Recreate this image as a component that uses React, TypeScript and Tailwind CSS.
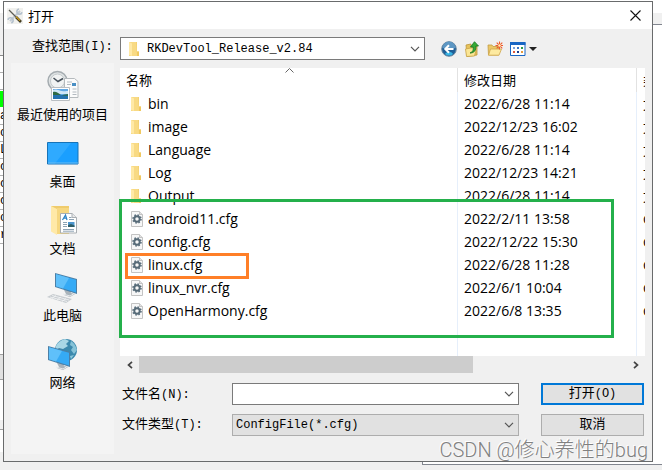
import React from "react";

const UI = "font-['Open_Sans','Noto_Sans_CJK_SC',sans-serif]";
const MONO = "font-['Liberation_Mono','Noto_Sans_CJK_SC',monospace]";

type Entry = { name: string; date: string; kind: "folder" | "cfg" };

const entries: Entry[] = [
  { name: "bin", date: "2022/6/28 11:14", kind: "folder" },
  { name: "image", date: "2022/12/23 16:02", kind: "folder" },
  { name: "Language", date: "2022/6/28 11:14", kind: "folder" },
  { name: "Log", date: "2022/12/23 14:21", kind: "folder" },
  { name: "Output", date: "2022/6/28 11:14", kind: "folder" },
  { name: "android11.cfg", date: "2022/2/11 13:58", kind: "cfg" },
  { name: "config.cfg", date: "2022/12/22 15:30", kind: "cfg" },
  { name: "linux.cfg", date: "2022/6/28 11:28", kind: "cfg" },
  { name: "linux_nvr.cfg", date: "2022/6/1 10:04", kind: "cfg" },
  { name: "OpenHarmony.cfg", date: "2022/6/8 13:35", kind: "cfg" },
];

function FolderIcon() {
  return (
    <svg width="12" height="16" viewBox="0 0 12 16" aria-hidden="true" className="shrink-0">
      <path d="M0 1h8v9.500h2V15H0z" fill="#f8da84" />
      <path d="M0 1l3 1.500V15L0 13.800z" fill="#ffe9a6" />
      <path d="M7.500 1H8v9.500h2V15H8z" fill="#efc860" />
    </svg>
  );
}

function CfgIcon() {
  return (
    <svg width="12" height="16" viewBox="0 0 12 16" aria-hidden="true" className="shrink-0">
      <path d="M.5.5h8l3 3v12H.5z" fill="#f7f7f7" stroke="#c3c3c3" />
      <path d="M8.5.5v3h3" fill="#e2e2e2" stroke="#c3c3c3" />
      <circle cx="6" cy="8" r="4" fill="none" stroke="#5f7380" strokeWidth="1.6" strokeDasharray="1.6 1.54" />
      <circle cx="6" cy="8" r="2.7" fill="none" stroke="#566a77" strokeWidth="1.9" />
    </svg>
  );
}

function ChevronDown() {
  return (
    <svg width="10" height="6" viewBox="0 0 10 6" aria-hidden="true" className="shrink-0">
      <path d="M1 .8l4 4 4-4" fill="none" stroke="#555" strokeWidth="1.2" />
    </svg>
  );
}

function ToolsIcon() {
  return (
    <svg width="16" height="16" viewBox="0 0 16 16" aria-hidden="true">
      <rect width="16" height="16" fill="#f1f1ee" />
      <path d="M13 3L3 13" stroke="#c3ccd5" strokeWidth="2" />
      <path d="M12 1a2.600 2.600 0 1 0 3 3.200M1 11.800a2.600 2.600 0 1 1 3.200 3" fill="none" stroke="#b4c1ce" strokeWidth="1.600" />
      <path d="M2 2l7 7" stroke="#5c5c56" strokeWidth="1.200" />
      <path d="M9 9l5 5" stroke="#3f3a22" strokeWidth="2.600" />
      <path d="M9 8.600l4 4" stroke="#d9a51f" strokeWidth="1.200" />
    </svg>
  );
}

function Screen({ x, y }: { x: number; y: number }) {
  return (
    <g transform={`translate(${x} ${y})`}>
      <path d="M9 17l6-1 1 4 4 1-5 3-6-2 2-1z" fill="#a9b3ba" />
      <path d="M8 21l7 2 5-3" fill="none" stroke="#e8ecee" />
      <path d="M0 0l22 6v15L0 14z" fill="#4b7fa6" />
      <path d="M1 1.3l20 5.5v12.7L1 13.2z" fill="#35aaf5" />
      <path d="M1 1.3l13 3.6L8 15.4 1 13.2z" fill="#5fc0fa" />
    </g>
  );
}

function RecentIcon() {
  return (
    <svg width="32" height="32" viewBox="0 0 32 32" aria-hidden="true">
      <circle cx="10.500" cy="11" r="9.500" fill="#dfe3e4" stroke="#a5acb0" strokeWidth="1.500" />
      <circle cx="10.500" cy="11" r="7" fill="#f1f3f3" stroke="#c4cacc" />
      <path d="M6.500 8l4.500 3.500 5-3" fill="none" stroke="#46505a" strokeWidth="1.500" />
      <path d="M17.500 8.500h10l3.500 3v16H17.500z" fill="#fbfbfb" stroke="#b5babd" />
      <path d="M20 12h5M20 14.500h4M25.500 19h4M25.500 22h4M25.500 24.500h4" stroke="#b3bac0" />
      <path d="M25 13h4v3h-4z" fill="#4a8fc4" />
      <path d="M4.500 17.500h18v13h-18z" fill="#fff" stroke="#b9bec2" />
      <path d="M6 19h15v10H6z" fill="#62a8e4" />
      <path d="M6 20c4-2 6 2 15 1v3H6z" fill="#cfe6f7" />
      <path d="M6 22c3-1 5 1 8 3H6z" fill="#2f6b44" />
      <path d="M6 25h15v4H6z" fill="#2471ae" />
      <path d="M15 25.500c2-1.500 4-1 6-1.500v2z" fill="#2d6c50" />
    </svg>
  );
}

function DesktopIcon() {
  return (
    <svg width="32" height="32" viewBox="0 0 32 32" aria-hidden="true">
      <path d="M.5 5.500h30.500v21.500H.5z" fill="#1a9fff" stroke="#1673b8" />
      <path d="M1 6h23L8 26.500H1z" fill="#37adff" opacity=".75" />
      <path d="M1 26h30" stroke="#6bbcf2" />
    </svg>
  );
}

function DocumentsIcon() {
  return (
    <svg width="32" height="32" viewBox="0 0 32 32" aria-hidden="true">
      <path d="M4 2h18v26H8z" fill="#efcb6c" />
      <path d="M4 2l6 3v26l-6-3.500z" fill="#ffe9a8" />
      <path d="M10 4h12v26H10z" fill="#f6d780" />
      <path d="M13.500 9.500h11.500l4.500 4v15.500h-16z" fill="#fff" stroke="#a9aeb2" />
      <path d="M25 9.500v4h4.500" fill="#e6e8ea" stroke="#a9aeb2" />
      <path d="M15.500 16l3-5 1.500 5M16.800 14.200h2.600" stroke="#2b82c5" fill="none" strokeWidth="1.200" />
      <path d="M22 13.500h2.500M22 15.500h5M16 18.500h4M16 20.500h4M16 22.500h4M16 25.500h11M16 27.200h11" stroke="#8da3b4" />
      <path d="M21 18h6.500v5H21z" fill="#4d96ce" />
      <path d="M21 21l3-1 3.500 1.500V23H21z" fill="#2d5c66" />
    </svg>
  );
}

function ComputerIcon() {
  return (
    <svg width="32" height="32" viewBox="0 0 32 32" aria-hidden="true">
      <Screen x={8} y={2} />
      <path d="M0 26l6-3 19 5-6 4z" fill="#c7ccd0" />
      <path d="M3 26l17 4.500M5 24.500l17 4.500M5 27.500l4-3M10 29l4-3M15 30.500l4-3" stroke="#f4f5f6" strokeWidth=".8" />
    </svg>
  );
}

function NetworkIcon() {
  return (
    <svg width="32" height="32" viewBox="0 0 32 32" aria-hidden="true">
      <circle cx="19" cy="12" r="11" fill="#3b89ad" />
      <path d="M9 8c2-4 5-6 9-7l4 2-3 3 2 2-5 3-4-1-4 3z" fill="#a8d7e6" />
      <path d="M24 3c3 2 5 5 6 9l-3 4-3-4 2-3-3-2z" fill="#86c3d8" />
      <path d="M23 18l4-1-3 4z" fill="#8bc9dc" />
      <Screen x={1} y={8} />
    </svg>
  );
}

const places = [
  { label: "最近使用的项目", icon: <RecentIcon /> },
  { label: "桌面", icon: <DesktopIcon /> },
  { label: "文档", icon: <DocumentsIcon /> },
  { label: "此电脑", icon: <ComputerIcon /> },
  { label: "网络", icon: <NetworkIcon /> },
];

function BackIcon() {
  return (
    <svg width="16" height="16" viewBox="0 0 16 16" aria-hidden="true">
      <circle cx="8" cy="8" r="7.300" fill="#1f5f97" stroke="#708aa0" />
      <path d="M1.500 7a6.500 6.500 0 0 1 13 0c-4 1.500-9 1.500-13 0z" fill="#5d97c4" />
      <path d="M4 13c2-3 6-3 8 0a6 6 0 0 1-8 0z" fill="#38b4e4" />
      <path d="M12.500 8H4.500M8 4.300L4.300 8 8 11.700" fill="none" stroke="#fff" strokeWidth="2" />
    </svg>
  );
}

function UpIcon() {
  return (
    <svg width="16" height="16" viewBox="0 0 16 16" aria-hidden="true">
      <path d="M2 4l5-1v3l6-1v9l-10 1.500z" fill="#e7c35b" stroke="#bd963a" strokeWidth=".8" />
      <path d="M1.500 8l8-1.500 3 1-2 7.500-8 .5z" fill="#fbe694" stroke="#c7a146" strokeWidth=".8" />
      <path d="M6 12c3-1 3.500-3 3.200-6H6.500L10.500.7 14.500 5h-2.700c.4 4-1.300 7-5.800 7z" fill="#35ab35" stroke="#167320" strokeWidth=".8" />
    </svg>
  );
}

function NewFolderIcon() {
  return (
    <svg width="16" height="16" viewBox="0 0 16 16" aria-hidden="true">
      <path d="M1 4h4l1 1.500h5.500V14H1.500z" fill="#ecc867" stroke="#c39c42" strokeWidth=".8" />
      <path d="M3.500 8h11L12 14.200H1.500z" fill="#fdeaa0" stroke="#cfa64a" strokeWidth=".8" />
      <path d="M12.500.5v8M8.500 4.500h8M9.700 1.700l5.600 5.600M15.300 1.700L9.700 7.300" stroke="#ee5a2b" strokeWidth="1.100" />
      <circle cx="12.500" cy="4.500" r="1.300" fill="#fff1b5" />
    </svg>
  );
}

function ViewIcon() {
  return (
    <svg width="16" height="14" viewBox="0 0 16 14" aria-hidden="true">
      <path d="M.5.5h14.500v13H.5z" fill="#fff" stroke="#1966c4" />
      <path d="M0 0h15.500v3H0z" fill="#1966c4" />
      <path d="M3 5h2v2H3z" fill="#7ba1d8" />
      <path d="M7 5h2v2H7z" fill="#3a75c6" />
      <path d="M11 5h2v2h-2z" fill="#2c9a48" />
      <path d="M3 9h2v2H3z" fill="#e05a3b" />
      <path d="M7 9h2v2H7z" fill="#1b3e8c" />
      <path d="M11 9h2v2h-2z" fill="#e79a3c" />
    </svg>
  );
}

/* Left edge of the main window, visible beside the dialog. */
function WindowLeftEdge() {
  const cells = ["a", "o", "L", "c", "c", "c", "o", "r"];
  return (
    <div aria-hidden="true" className={`${MONO} flex w-[3px] shrink-0 flex-col overflow-hidden bg-white text-[12px] leading-4`}>
      <div className="h-3 shrink-0" />
      <div className="h-[43px] shrink-0 border-b border-[#8a8a8a] bg-[#f0f0f0]" />
      <div className="h-[17px] shrink-0 border-b border-[#b0b0b0]" />
      <div className="h-[17px] shrink-0 border-b border-[#b0b0b0]" />
      <div className="my-px h-4 shrink-0 bg-[#00ff00]" />
      {cells.map((c, i) => (
        <div key={i} className="h-[17px] shrink-0 overflow-hidden border-b border-[#b0b0b0]">
          {c}
        </div>
      ))}
      <div className="h-[110px] shrink-0" />
      <div className="h-[26px] shrink-0 border-y border-[#a0a0a0] bg-[#e1e1e1]" />
      <div className="h-10 shrink-0" />
      <div className="h-[10px] shrink-0 border-b border-[#a0a0a0] bg-[#f0f0f0]" />
      <div className="h-[22px] shrink-0" />
      <div className="grow bg-[#f0f0f0]" />
    </div>
  );
}

export default function App() {
  return (
    <div className={`${UI} flex flex-col bg-white text-[13px] text-black`}>
      <div className="flex pt-px">
        <WindowLeftEdge />

        <main className="relative flex min-w-0 grow flex-col border border-[#696b6c] bg-[#f0f0f0]">
          <header className="flex h-[27px] items-center bg-white pr-[11px] pl-[3px]">
            <ToolsIcon />
            <h1 className="ml-[5px] grow leading-5">打开</h1>
            <button type="button" aria-label="关闭">
              <svg width="11" height="11" viewBox="0 0 11 11" aria-hidden="true">
                <path d="M.5.5l10 10M10.500.5l-10 10" stroke="#111" strokeWidth="1.100" />
              </svg>
            </button>
          </header>

          <div className="flex h-[34px] items-end pb-[3px] pl-7">
            <label htmlFor="look-in" className={`${MONO} w-22 leading-[26px] whitespace-nowrap`}>
              查找范围<span className="text-[12px]">(I):</span>
            </label>
            <div className="flex h-[23px] w-[305px] items-center border border-[#7a7a7a] bg-white pr-1 pl-2">
              <FolderIcon />
              <select id="look-in" className={`${MONO} ml-[6px] min-w-0 grow appearance-none bg-transparent text-[12px] leading-5`}>
                <option>RKDevTool_Release_v2.84</option>
              </select>
              <ChevronDown />
            </div>
            <div className="ml-4 flex h-[23px] items-center gap-[7px]">
              <button type="button" aria-label="后退"><BackIcon /></button>
              <button type="button" aria-label="向上一级"><UpIcon /></button>
              <button type="button" aria-label="新建文件夹"><NewFolderIcon /></button>
              <button type="button" aria-label="查看" className="flex items-center gap-[3px]">
                <ViewIcon />
                <svg width="8" height="4" viewBox="0 0 8 4" aria-hidden="true">
                  <path d="M0 0h8L4 4z" fill="#222" />
                </svg>
              </button>
            </div>
          </div>

          <div className="flex gap-[6px] pr-[7px] pb-[7px] pl-[7px]">
            <nav className="flex w-[103px] shrink-0 flex-col bg-[#f4f4f4] pt-[7px]">
              {places.map((p) => (
                <button key={p.label} type="button" className="flex h-[67px] flex-col items-center gap-[3px] whitespace-nowrap">
                  {p.icon}
                  <span className="leading-[18px]">{p.label}</span>
                </button>
              ))}
            </nav>

            <div className="min-w-0 grow pt-[5px]">
              <div className="relative bg-white">
                <table className="w-full table-fixed border-separate border-spacing-0 text-left text-[14px]">
                  <colgroup>
                    <col />
                    <col className="w-[179px]" />
                    <col className="w-2" />
                  </colgroup>
                  <thead>
                    <tr className="h-6 text-[13px] leading-5">
                      <th className="border-r border-[#e2e2e2] p-0 pl-[6px] font-normal">名称</th>
                      <th className="border-r border-[#e2e2e2] p-0 pl-[6px] font-normal">修改日期</th>
                      <th className="overflow-hidden p-0 pl-[6px] font-normal whitespace-nowrap">类型</th>
                    </tr>
                  </thead>
                  <tbody>
                    {entries.map((e) => (
                      <tr key={e.name} className="h-[23px] leading-[22px]">
                        <td className="border-r border-[#e6effb] p-0 pl-[11px]">
                          <div className="flex items-center gap-[5px]">
                            {e.kind === "folder" ? <FolderIcon /> : <CfgIcon />}
                            {e.name}
                          </div>
                        </td>
                        <td className="border-r border-[#e6effb] p-0 pl-[6px]">{e.date}</td>
                        <td className="overflow-hidden p-0 pl-[6px] text-[13px] whitespace-nowrap">
                          {e.kind === "folder" ? "文件夹" : "CFG 文件"}
                        </td>
                      </tr>
                    ))}
                    <tr className="h-[34px]">
                      <td className="border-r border-[#e6effb] p-0" />
                      <td className="border-r border-[#e6effb] p-0" />
                      <td className="p-0" />
                    </tr>
                  </tbody>
                </table>
                <svg width="9" height="5" viewBox="0 0 9 5" aria-hidden="true" className="absolute top-0 left-[165px]">
                  <path d="M.5 4.500l4-4 4 4" fill="none" stroke="#666" />
                </svg>
                <div className="pointer-events-none absolute top-[131px] right-[31px] -left-px h-[139px] border-3 border-[#24b04b]" />
                <div className="pointer-events-none absolute top-[185px] left-[5px] h-[26px] w-[124px] border-3 border-[#ff7f27]" />
              </div>

              <div className="flex h-[17px] items-center">
                <button type="button" aria-label="向左滚动" className="flex w-[19px] justify-center">
                  <svg width="6" height="8" viewBox="0 0 6 8" aria-hidden="true">
                    <path d="M5 .8L1.500 4 5 7.200" fill="none" stroke="#444" strokeWidth="1.700" />
                  </svg>
                </button>
                <div className="flex h-full grow">
                  <div className="w-[334px] bg-[#cdcdcd]" />
                </div>
                <button type="button" aria-label="向右滚动" className="flex w-[19px] justify-center">
                  <svg width="6" height="8" viewBox="0 0 6 8" aria-hidden="true">
                    <path d="M1 .8L4.500 4 1 7.200" fill="none" stroke="#444" strokeWidth="1.700" />
                  </svg>
                </button>
              </div>

              <form className={`${MONO} mt-[10px] mb-[18px] grid grid-cols-[110px_1fr_103px] grid-rows-[22px_22px] gap-y-[9px] pr-px pl-[2px]`}>
                <label htmlFor="file-name" className="leading-6">
                  文件名<span className="text-[12px]">(N):</span>
                </label>
                <div className="mr-[22px] flex items-center border border-[#7a7a7a] bg-white pr-1">
                  <input id="file-name" type="text" className="min-w-0 grow px-1 text-[12px] outline-none" />
                  <ChevronDown />
                </div>
                <button type="button" className="border-2 border-[#0078d7] bg-[#e1e1e1] leading-[18px]">
                  打开<span className="text-[12px]">(O)</span>
                </button>
                <label htmlFor="file-type" className="leading-[22px]">
                  文件类型<span className="text-[12px]">(T):</span>
                </label>
                <div className="mr-[22px] flex items-center border border-[#adadad] bg-[#e1e1e1] pr-1 pl-[3px]">
                  <select id="file-type" className="min-w-0 grow appearance-none bg-transparent text-[12px] leading-5">
                    <option>ConfigFile(*.cfg)</option>
                  </select>
                  <ChevronDown />
                </div>
                <button type="button" className="border border-[#adadad] bg-[#e1e1e1] leading-5">
                  取消
                </button>
              </form>
            </div>
          </div>

          <p className="pointer-events-none absolute right-1 -bottom-[3px] font-['Roboto','Noto_Sans_CJK_SC',sans-serif] text-[20px] leading-7 font-light whitespace-nowrap text-[#808080] [text-shadow:-1px_-1px_0_#ffffff]">
            CSDN @修心养性的bug
          </p>
        </main>

        <div aria-hidden="true" className="flex w-[9px] shrink-0 flex-col">
          <div className="mt-3 h-3 border-b border-[#82868f] bg-[#f0f0f0]" />
        </div>
      </div>

      <div aria-hidden="true" className="flex h-[9px] bg-[#f0f0f0]">
        <div className="ml-auto h-[3px] w-60 border-b border-l border-[#82868f] bg-white" />
      </div>
    </div>
  );
}
